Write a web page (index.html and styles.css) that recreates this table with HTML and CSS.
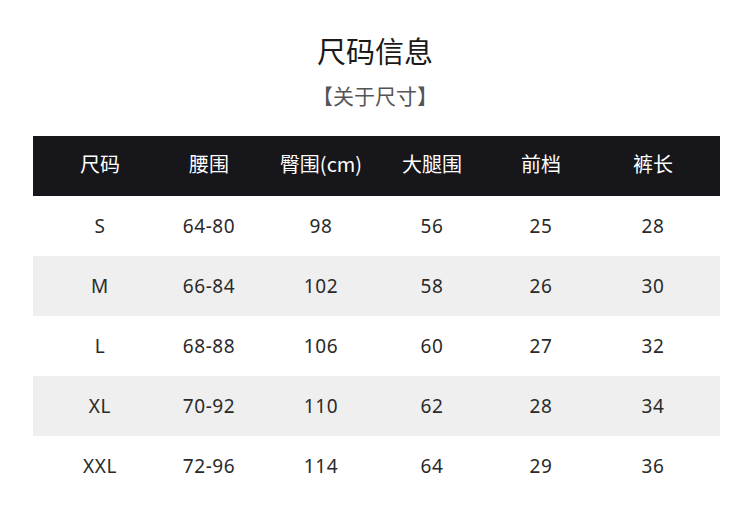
FILE: index.html
```html
<!DOCTYPE html>
<html lang="zh">
<head>
<meta charset="utf-8">
<link rel="stylesheet" href="styles.css">
</head>
<body>
<div class="page">
  <h1 class="title">尺码信息</h1>
  <div class="subtitle">【关于尺寸】</div>
  <div class="table">
    <div class="row head">
      <div>尺码</div><div>腰围</div><div>臀围(cm)</div><div>大腿围</div><div>前档</div><div>裤长</div>
    </div>
    <div class="row">
      <div>S</div><div>64-80</div><div>98</div><div>56</div><div>25</div><div>28</div>
    </div>
    <div class="row alt">
      <div>M</div><div>66-84</div><div>102</div><div>58</div><div>26</div><div>30</div>
    </div>
    <div class="row">
      <div>L</div><div>68-88</div><div>106</div><div>60</div><div>27</div><div>32</div>
    </div>
    <div class="row alt">
      <div>XL</div><div>70-92</div><div>110</div><div>62</div><div>28</div><div>34</div>
    </div>
    <div class="row">
      <div>XXL</div><div>72-96</div><div>114</div><div>64</div><div>29</div><div>36</div>
    </div>
  </div>
</div>
</body>
</html>
```
FILE: styles.css
```css
html, body {
  margin: 0;
  padding: 0;
  background: #ffffff;
}
.page {
  width: 750px;
  height: 522px;
  font-family: "Noto Sans", "Noto Sans CJK SC", sans-serif;
  color: #222;
  display: flex;
  flex-direction: column;
  align-items: center;
  padding-top: 30px;
  box-sizing: border-box;
}
.title {
  margin: 0;
  font-family: "Noto Sans CJK SC", sans-serif;
  font-weight: 400;
  font-size: 29px;
  line-height: 40px;
  color: #1a1a1a;
}
.subtitle {
  margin-top: 10px;
  font-family: "Noto Sans CJK SC", sans-serif;
  font-size: 21px;
  line-height: 30px;
  color: #555;
}
.table {
  margin-top: 26px;
  width: 687px;
  align-self: flex-start;
  margin-left: 33px;
}
.row {
  display: grid;
  grid-template-columns: 110px 108px 116px 106px 112px 112px;
  padding-left: 12px;
  height: 60px;
  align-items: center;
  font-size: 19px;
  letter-spacing: 0.6px;
  color: #2a2a2a;
}
.row > div {
  text-align: center;
}
.row.head {
  background: #16161b;
  color: #fff;
  font-family: "Noto Sans CJK SC", "Noto Sans", sans-serif;
  font-size: 20px;
  letter-spacing: 0;
  padding-bottom: 6px;
  box-sizing: border-box;
}
.row.alt {
  background: #efefef;
}
```
